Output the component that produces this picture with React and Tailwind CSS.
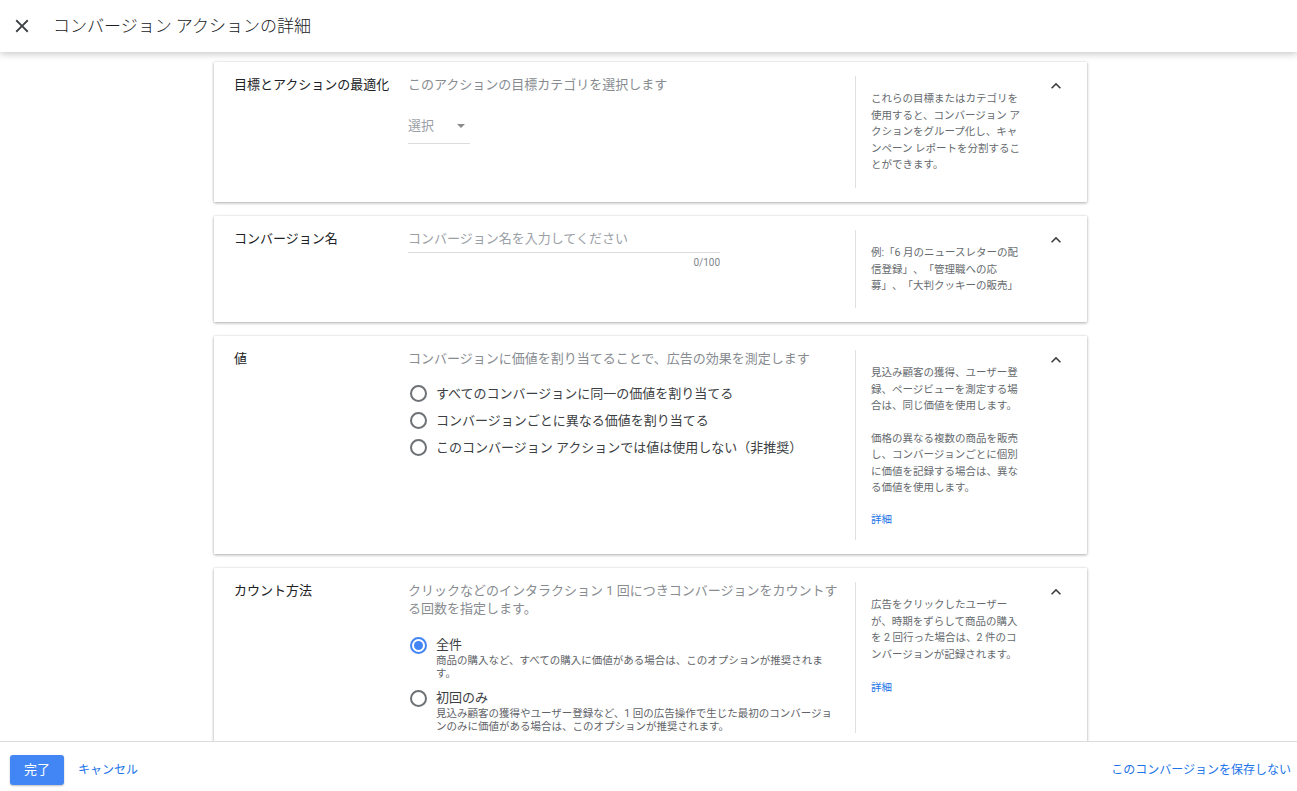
function Chevron() {
  return (
    <svg viewBox="0 0 24 24" className="ml-[23px] h-5 w-5 shrink-0 fill-[#3c4043]">
      <path d="M7.41 15.41L12 10.83l4.59 4.58L18 14l-6-6-6 6z" />
    </svg>
  );
}

function Radio({ checked }) {
  if (checked) {
    return (
      <span className="flex h-[17px] w-[17px] shrink-0 items-center justify-center rounded-full border-2 border-[#4285f4]">
        <span className="h-[9px] w-[9px] rounded-full bg-[#4285f4]" />
      </span>
    );
  }
  return <span className="block h-[17px] w-[17px] shrink-0 rounded-full border-2 border-[#6e7175]" />;
}

function Card({ label, help, className, children }) {
  return (
    <section
      className={`flex w-[873px] bg-white py-[14px] pl-5 shadow-[0_1px_3px_rgba(0,0,0,0.32),0_0_1px_rgba(0,0,0,0.12)] ${className}`}
    >
      <div className="w-[174px] shrink-0 text-[13px] leading-[18px] text-[#202124]">{label}</div>
      <div className="w-[430px] shrink-0">{children}</div>
      <div className="ml-[17px] flex flex-1 border-l border-[#e0e0e0]">
        <div className="w-[167px] shrink-0 pl-[15px] pt-[15px] text-[10.5px] leading-[16.5px] text-[#666a6e]">
          {help}
        </div>
        <Chevron />
      </div>
    </section>
  );
}

const desc = "text-[13px] leading-[18px] text-[#888c91]";

const valueOptions = [
  "すべてのコンバージョンに同一の価値を割り当てる",
  "コンバージョンごとに異なる価値を割り当てる",
  "このコンバージョン アクションでは値は使用しない（非推奨）",
];

const countOptions = [
  {
    title: "全件",
    note: "商品の購入など、すべての購入に価値がある場合は、このオプションが推奨されます。",
    checked: true,
  },
  {
    title: "初回のみ",
    note: "見込み顧客の獲得やユーザー登録など、1 回の広告操作で生じた最初のコンバージョンのみに価値がある場合は、このオプションが推奨されます。",
    checked: false,
  },
];

export default function App() {
  return (
    <div className="flex h-screen flex-col bg-white font-[Roboto,'Noto_Sans_CJK_JP',sans-serif] [text-spacing-trim:space-all]">
      <header className="relative z-10 flex h-[52px] shrink-0 items-center bg-white pl-[11px] shadow-[0_2px_7px_rgba(0,0,0,0.22)]">
        <svg viewBox="0 0 24 24" className="h-[22px] w-[22px] fill-[#3c4043]">
          <path d="M19 6.41L17.59 5 12 10.59 6.41 5 5 6.41 10.59 12 5 17.59 6.41 19 12 13.41 17.59 19 19 17.59 13.41 12z" />
        </svg>
        <h1 className="ml-[20px] text-[17px] font-light leading-6 text-[#202124]">コンバージョン アクションの詳細</h1>
      </header>

      <main className="flex-1 overflow-hidden">
        <div className="ml-[214px] flex flex-col gap-[14px] pt-[10px]">
          <Card
            className="h-[140px]"
            label="目標とアクションの最適化"
            help="これらの目標またはカテゴリを使用すると、コンバージョン アクションをグループ化し、キャンペーン レポートを分割することができます。"
          >
            <p className={desc}>このアクションの目標カテゴリを選択します</p>
            <div className="mt-[23px] flex w-[62px] items-center justify-between border-b border-[#dadce0] pb-[8px] pr-[5px]">
              <span className="text-[13px] leading-[18px] text-[#9aa0a6]">選択</span>
              <svg viewBox="0 0 10 5" className="h-[4px] w-[8px] fill-[#8a8a8a]">
                <path d="M0 0l5 5 5-5z" />
              </svg>
            </div>
          </Card>

          <Card
            className="h-[106px]"
            label="コンバージョン名"
            help="例:「6 月のニュースレターの配信登録」、「管理職への応募」、「大判クッキーの販売」"
          >
            <div className="w-[312px]">
              <div className="border-b border-[#dadce0] pb-[4px] text-[13px] leading-[18px] text-[#9aa0a6]">
                コンバージョン名を入力してください
              </div>
              <div className="mt-[3px] text-right text-[10px] leading-[14px] text-[#80868b]">0/100</div>
            </div>
          </Card>

          <Card
            className="h-[218px]"
            label="値"
            help={
              <>
                <p>見込み顧客の獲得、ユーザー登録、ページビューを測定する場合は、同じ価値を使用します。</p>
                <p className="mt-[16px]">価格の異なる複数の商品を販売し、コンバージョンごとに個別に価値を記録する場合は、異なる価値を使用します。</p>
                <p className="mt-[15px] text-[#1a73e8]">詳細</p>
              </>
            }
          >
            <p className={desc}>コンバージョンに価値を割り当てることで、広告の効果を測定します</p>
            <ul className="mt-[12px]">
              {valueOptions.map((o) => (
                <li key={o} className="ml-[2px] flex h-[27px] items-center gap-[9px] text-[13px] text-[#3c4043]">
                  <Radio />
                  <span>{o}</span>
                </li>
              ))}
            </ul>
          </Card>

          <Card
            label="カウント方法"
            help={
              <>
                <p>広告をクリックしたユーザーが、時期をずらして商品の購入を 2 回行った場合は、2 件のコンバージョンが記録されます。</p>
                <p className="mt-[17px] text-[#1a73e8]">詳細</p>
              </>
            }
          >
            <p className="text-[13px] leading-[17.5px] text-[#888c91]">
              クリックなどのインタラクション 1 回につきコンバージョンをカウントする回数を指定します。
            </p>
            <ul className="mt-[19px] flex flex-col gap-[9px]">
              {countOptions.map((o) => (
                <li key={o.title} className="ml-[2px] flex items-start gap-[9px]">
                  <span className="mt-[0.5px] block">
                    <Radio checked={o.checked} />
                  </span>
                  <div className="w-[398px]">
                    <div className="text-[13px] leading-[18px] text-[#3c4043]">{o.title}</div>
                    <div className="text-[10.5px] leading-[13px] text-[#5f6368]">{o.note}</div>
                  </div>
                </li>
              ))}
            </ul>
          </Card>
        </div>
      </main>

      <footer className="flex h-[50px] shrink-0 items-start border-t border-[#dadce0] bg-white px-[10px] pt-[13px]">
        <button className="h-[30px] w-[54px] rounded-[3px] bg-[#4285f4] text-[13px] text-white shadow-[0_1px_2px_rgba(0,0,0,0.25)]">
          完了
        </button>
        <button className="ml-[14px] h-[30px] text-[12px] text-[#1a73e8]">キャンセル</button>
        <button className="ml-auto mr-[-4px] h-[30px] text-[12px] text-[#1a73e8]">このコンバージョンを保存しない</button>
      </footer>
    </div>
  );
}
